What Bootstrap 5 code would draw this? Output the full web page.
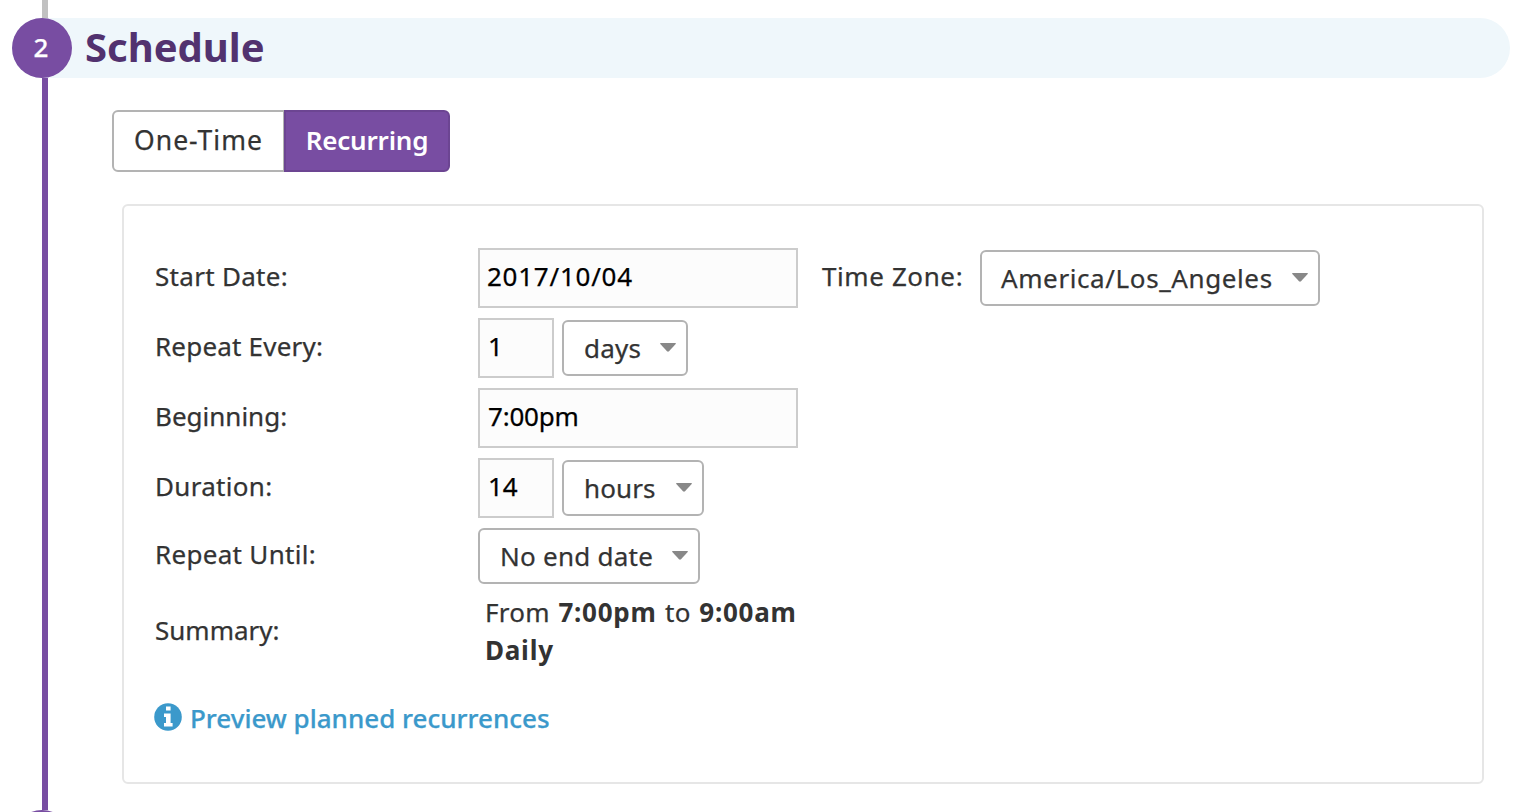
<!DOCTYPE html>
<html lang="en">
<head>
<meta charset="utf-8">
<meta name="viewport" content="width=device-width, initial-scale=1">
<title>Schedule</title>
<link href="https://cdn.jsdelivr.net/npm/bootstrap@5.3.0/dist/css/bootstrap.min.css" rel="stylesheet">
<style>
body{font-family:"Noto Sans","Open Sans",sans-serif;font-size:26px;line-height:38px;color:#333;background:#fff;-webkit-text-stroke:.25px currentColor}
.stub{width:6px;height:18px;margin-left:42px;background:#c1c1c1}
.step-head{height:60px;margin:0 6px 0 12px;background:#eff7fb;border-radius:30px}
.step-num{width:60px;height:60px;background:#784da2;color:#fff;font-weight:500;padding:0 2px 2px 0}
.step-title{font-size:40px;font-weight:700;color:#52326f;line-height:58px;margin-left:13px;padding-bottom:2px;-webkit-text-stroke:0}
.rail{width:6px;height:732px;margin-left:42px;background:#784da2}
.step-body{margin:32px 32px 0 64px}
.mode{height:62px}
.mode .btn{border-width:2px;border-radius:6px;font-size:inherit;line-height:38px;padding:0 0 2px;flex:none}
.mode .btn-one{width:173px;border-color:#b3b3b3;color:#333;font-size:26.5px;letter-spacing:1px}
.mode .btn-rec{width:166px;background:#784da2;border-color:#6c4592;color:#fff;font-weight:600;letter-spacing:-.2px;-webkit-text-stroke:0}
.panel{margin:32px 0 0 10px;height:580px;border:2px solid #e6e6e6;border-radius:6px;padding:42px 0 0 31px}
.field-row{margin-bottom:10px;height:60px}
.field-row.until{height:56px;margin-bottom:9px}
.field-label{width:323px;flex:none;padding-bottom:2px}
.field-row .field-label,.zone-label{padding-bottom:4px}
.form-control.box{width:320px;height:60px;border:2px solid #ccc;border-radius:0;background:#fcfcfc;color:#000;font-size:26px;line-height:38px;padding:0 8px 4px;letter-spacing:-.2px}
.form-control.box-date{letter-spacing:.75px;padding-left:7px}
.form-control.box-sm{width:76px;margin-right:8px}
.picker{height:56px;border:2px solid #b3b3b3;border-radius:6px;padding:0 10px 1px 20px;font-size:inherit;line-height:38px;color:#333;background:#fff;letter-spacing:.25px}
.picker-zone{width:340px;margin-left:17px;padding-left:19px;letter-spacing:.6px}
.picker-days{width:126px}
.picker-hours{width:142px;letter-spacing:.1px}
.picker-end{width:222px}
.zone-label{width:141px;margin-left:24px;white-space:nowrap}
.tri{width:16px;height:9px;margin-bottom:1px}
.summary{padding-left:7px;word-spacing:1.4px}
.summary b{letter-spacing:.75px;-webkit-text-stroke:0}
.track-1{letter-spacing:.2px}
.track-2{letter-spacing:.3px}
.track-3{letter-spacing:.6px}
.next-step{height:2px;overflow:hidden}
.next-num{width:60px;height:60px;margin-left:12px;background:#784da2}
.preview{color:#3b99cb;font-weight:500;margin-top:30px;text-decoration:none;width:max-content}
.info{width:28px;height:28px;margin:0 8px 2px -1px}
</style>
</head>
<body>
<div class="stub"></div>
<header class="step-head d-flex align-items-center">
 <div class="step-num rounded-circle d-flex align-items-center justify-content-center flex-shrink-0">2</div>
 <h1 class="step-title mb-0">Schedule</h1>
</header>
<div class="d-flex">
 <div class="rail flex-shrink-0"></div>
 <main class="step-body flex-grow-1">
  <div class="btn-group mode">
   <button type="button" class="btn btn-one">One-Time</button>
   <button type="button" class="btn btn-rec">Recurring</button>
  </div>
  <section class="panel">
   <div class="field-row d-flex align-items-center">
    <div class="field-label track-2">Start Date:</div>
    <input class="form-control box box-date" value="2017/10/04">
    <div class="zone-label track-3">Time Zone:</div>
    <button type="button" class="picker picker-zone d-flex align-items-center justify-content-between">America/Los_Angeles<svg class="tri" viewBox="0 0 16 9"><path d="M0.6 0h14.8q.8 .3 .3 1L9 8.300q-1 .8-2 0L.3 1Q-.2 .3 .6 0z" fill="#888"/></svg></button>
   </div>
   <div class="field-row d-flex align-items-center">
    <div class="field-label track-1">Repeat Every:</div>
    <input class="form-control box box-sm" value="1">
    <button type="button" class="picker picker-days d-flex align-items-center justify-content-between">days<svg class="tri" viewBox="0 0 16 9"><path d="M0.6 0h14.8q.8 .3 .3 1L9 8.300q-1 .8-2 0L.3 1Q-.2 .3 .6 0z" fill="#888"/></svg></button>
   </div>
   <div class="field-row d-flex align-items-center">
    <div class="field-label">Beginning:</div>
    <input class="form-control box" value="7:00pm">
   </div>
   <div class="field-row d-flex align-items-center">
    <div class="field-label track-2">Duration:</div>
    <input class="form-control box box-sm" value="14">
    <button type="button" class="picker picker-hours d-flex align-items-center justify-content-between">hours<svg class="tri" viewBox="0 0 16 9"><path d="M0.6 0h14.8q.8 .3 .3 1L9 8.300q-1 .8-2 0L.3 1Q-.2 .3 .6 0z" fill="#888"/></svg></button>
   </div>
   <div class="field-row until d-flex align-items-center">
    <div class="field-label track-2">Repeat Until:</div>
    <button type="button" class="picker picker-end d-flex align-items-center justify-content-between">No end date<svg class="tri" viewBox="0 0 16 9"><path d="M0.6 0h14.8q.8 .3 .3 1L9 8.300q-1 .8-2 0L.3 1Q-.2 .3 .6 0z" fill="#888"/></svg></button>
   </div>
   <div class="d-flex align-items-center">
    <div class="field-label">Summary:</div>
    <div class="summary track-2">From <b>7:00pm</b> to <b>9:00am</b><br><b>Daily</b></div>
   </div>
   <a class="preview d-flex align-items-center" href="#"><svg class="info" viewBox="0 0 28 28"><circle cx="14" cy="14" r="13.800" fill="#3b99cb"/><path d="M12 3.500h4.600v4H12zM10 10.500h6.600V20h2v3.500H10V20h2v-6H10z" fill="#fff"/></svg>Preview planned recurrences</a>
  </section>
 </main>
</div>
<div class="next-step"><div class="next-num rounded-circle"></div></div>
<script src="https://cdn.jsdelivr.net/npm/bootstrap@5.3.0/dist/js/bootstrap.bundle.min.js"></script>
</body>
</html>
